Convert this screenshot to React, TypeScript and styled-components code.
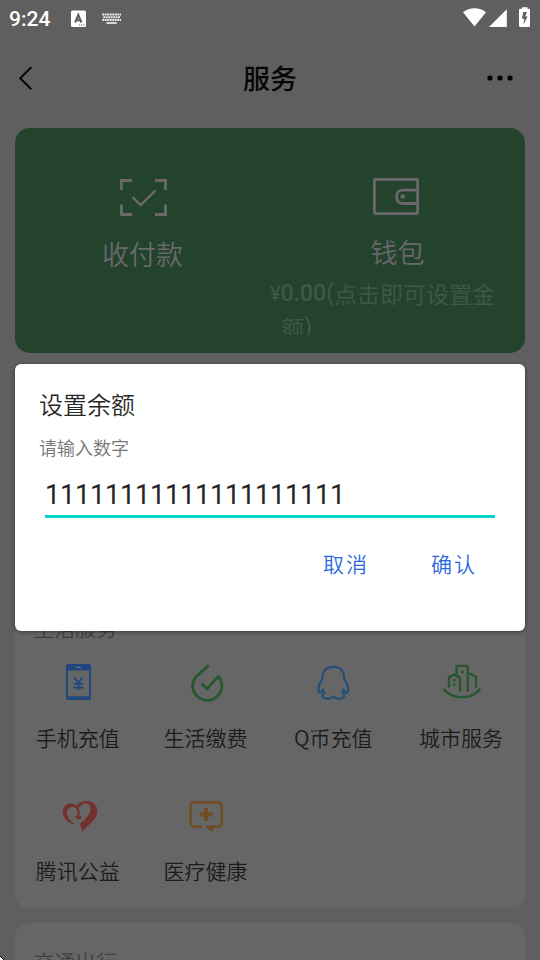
import React from "react";
import styled, { createGlobalStyle } from "styled-components";

const Global = createGlobalStyle`
  * { box-sizing: border-box; }
  html, body { margin: 0; padding: 0; background: #5f5f5f; overflow: hidden; }
  button, input { font: inherit; border: 0; padding: 0; background: none; outline: 0; }
`;

const Screen = styled.div`
  position: relative;
  display: flex;
  flex-direction: column;
  width: 540px;
  height: 960px;
  overflow: hidden;
  background: #5f5f5f;
  font-family: "Noto Sans CJK SC", sans-serif;
  font-weight: 350;
  color: #1c1c1c;
  svg { display: block; overflow: visible; }
`;

const StatusBar = styled.header`
  display: flex;
  flex: none;
  align-items: center;
  height: 37px;
  padding: 0 9px;
`;

const Clock = styled.time`
  width: 62px;
  padding-top: 1px;
  color: #fff;
  font: 500 21px/37px Roboto, sans-serif;
`;

const Spacer = styled.div`
  flex: 1;
`;

const NavBar = styled.nav`
  display: grid;
  flex: none;
  grid-template-columns: 60px 1fr 60px;
  align-items: center;
  height: 81px;
  margin-bottom: 10px;
`;

const NavButton = styled.button<{ $start: number }>`
  padding-left: ${(p) => p.$start}px;
`;

const NavTitle = styled.h1`
  margin: 0;
  color: #060606;
  font-size: 27px;
  font-weight: 500;
  line-height: 78px;
  text-align: center;
`;

const PayCard = styled.section`
  display: grid;
  flex: none;
  grid-template-columns: 255px 255px;
  height: 225px;
  margin: 0 15px;
  border-radius: 15px;
  background: #23432d;
  color: #6a686b;
`;

const PayItem = styled.div<{ $top: number; $shift: number }>`
  display: flex;
  flex-direction: column;
  align-items: center;
  padding-top: ${(p) => p.$top}px;
  > svg { margin-left: ${(p) => p.$shift}px; }
`;

const PayLabel = styled.div<{ $gap: number }>`
  margin-top: ${(p) => p.$gap}px;
  font-size: 27px;
  line-height: 40px;
`;

const Balance = styled.div`
  align-self: stretch;
  height: 58px;
  margin-top: 5px;
  overflow: hidden;
  color: #40584a;
  font-size: 23px;
  line-height: 32.5px;
  white-space: nowrap;
`;

const BalanceLine = styled.div<{ $indent: number }>`
  display: flex;
  padding-left: ${(p) => p.$indent}px;
`;

const Amount = styled.span<{ $weight: number; $size: number }>`
  padding-top: 1px;
  font-family: Roboto, sans-serif;
  font-size: ${(p) => p.$size}px;
  font-weight: ${(p) => p.$weight};
`;

const ServiceCard = styled.section<{ $height: number; $top: number }>`
  flex: none;
  height: ${(p) => p.$height}px;
  margin: ${(p) => p.$top}px 15px 0;
  border-radius: 14px;
  background: #666;
`;

const SectionTitle = styled.h2`
  margin: 0;
  padding: 22px 0 0 18.5px;
  color: #3f3f3f;
  font-size: 20.8px;
  font-weight: 350;
  line-height: 32px;
`;

const ServiceGrid = styled.div`
  display: grid;
  grid-template-columns: repeat(4, 127.7px);
  grid-auto-rows: 133px;
  padding-top: 14px;
`;

const Service = styled.div`
  display: flex;
  flex-direction: column;
  align-items: center;
  padding-right: 2px;
`;

const IconBox = styled.div`
  display: flex;
  align-items: center;
  justify-content: center;
  width: 48px;
  height: 48px;
`;

const ServiceLabel = styled.div`
  margin-top: 14px;
  font-size: 21px;
  line-height: 34px;
`;

const Dialog = styled.div`
  position: absolute;
  top: 364px;
  left: 15px;
  display: flex;
  flex-direction: column;
  width: 510px;
  height: 267px;
  padding: 20px 24px 0;
  border-radius: 6px;
  background: #fff;
  box-shadow: 0 1px 4px rgba(0, 0, 0, 0.4);
`;

const DialogTitle = styled.h3`
  margin: 0;
  color: #282828;
  font-size: 24px;
  font-weight: 350;
  line-height: 39px;
`;

const DialogMessage = styled.p`
  margin: 9px 0 0;
  color: #757575;
  font-size: 18px;
  line-height: 30px;
`;

const AmountInput = styled.input`
  width: 450px;
  height: 47px;
  margin: 9px 0 0 6px;
  padding-top: 4px;
  border-bottom: 3px solid #05d6c7;
  border-radius: 0;
  color: #242424;
  font: 400 27px/40px Roboto, sans-serif;
  letter-spacing: -0.17px;
`;

const DialogActions = styled.div`
  display: flex;
  justify-content: flex-end;
  gap: 62px;
  margin-top: 28px;
  padding-right: 24px;
`;

const DialogButton = styled.button`
  color: #2a68de;
  font-size: 21px;
  line-height: 34px;
  letter-spacing: 2px;
`;

const CornerMark = styled.svg`
  position: absolute;
  left: 0;
  bottom: 0;
`;

const KeyboardIcon = () => (
  <svg width="20" height="12" viewBox="0 0 20 12">
    <g stroke="#ececec" strokeWidth="2" strokeDasharray="1.9 .6">
      <path d="M.3 1.4H19M1.2 4.2H18.5M.3 7H19" />
    </g>
    <path d="M4.5 10h10.3" stroke="#ececec" strokeWidth="1.7" />
  </svg>
);

const InputMethodIcon = () => (
  <svg width="15" height="16" viewBox="0 0 15 16">
    <rect y="-.5" width="15" height="16.5" rx="1.5" fill="#fff" />
    <path d="M4.2 11.5 7.3 4l3.1 7.5M5.3 9.2h4" fill="none" stroke="#5f5f5f" strokeWidth="2.1" />
    <path d="M8 14h5.5" stroke="#5f5f5f" strokeWidth="1.2" strokeDasharray="1.2 .9" />
  </svg>
);

const SignalIcons = () => (
  <svg width="68" height="22" viewBox="0 0 68 22">
    <g fill="#fff">
      <path d="M0 4.3C6.5-1.1 16.5-1.1 23 4.3L11.5 18.5z" />
      <path d="M43.8 1.2V19H26z" />
      <path d="M59-.8h5.5v1.5h1.2q1.3 0 1.3 1.3v15.7q0 1.3-1.3 1.3h-8.4q-1.3 0-1.3-1.3V2q0-1.3 1.3-1.3H59z" />
    </g>
    <path d="m60.2 4-1.2 6.8h2.2l-.8 6 4.2-8.3h-2.4L64 4z" fill="#5f5f5f" />
  </svg>
);

const BackIcon = () => (
  <svg width="14" height="24" viewBox="0 0 14 24">
    <path d="M13.3 1.2 2.2 12.3l11.1 11" fill="none" stroke="#050505" strokeWidth="2" />
  </svg>
);

const MoreIcon = () => (
  <svg width="28" height="6" viewBox="0 0 28 6">
    <circle cx="3" cy="3" r="2.6" />
    <circle cx="13" cy="3" r="2.6" />
    <circle cx="23" cy="3" r="2.6" />
  </svg>
);

const ScanIcon = () => (
  <svg width="47" height="37" viewBox="0 0 47 37" fill="none" stroke="#6a686b">
    <path d="M1.5 11V1.5H12M35 1.5h10.5V11M45.5 25.5v10H35M12 35.5H1.5v-10" strokeWidth="2.8" />
    <path d="m12.5 18.2 8.2 7.8 14.6-14.4" strokeWidth="2.4" />
  </svg>
);

const WalletIcon = () => (
  <svg width="46" height="37" viewBox="0 0 46 37" fill="none" stroke="#6a686b" strokeWidth="2.8">
    <rect x="1.4" y="1.4" width="43.2" height="34.2" rx="1" />
    <path d="M44 12.1H30q-6.4 0-6.4 6.7t6.4 6.7h14" />
    <circle cx="29.7" cy="18.5" r="2.3" fill="#6a686b" stroke="none" />
  </svg>
);

const PhoneIcon = () => (
  <svg width="48" height="48" viewBox="0 0 48 48">
    <path
      fill="#20477f"
      fillRule="evenodd"
      d="M14 6h21q2 0 2 2v32q0 2-2 2H14q-2 0-2-2V8q0-2 2-2Zm0 6.6v25.6h21V12.6Z"
    />
    <path d="M22 9.3h5" stroke="#777" strokeWidth="1.2" />
    <path d="m20.3 19 4.1 6.2 4.3-6.2M19.5 25.8h10M19.5 29.5h10M24.5 25v7" fill="none" stroke="#20477f" strokeWidth="1.8" />
  </svg>
);

const UtilityIcon = () => (
  <svg width="48" height="48" viewBox="0 0 48 48" fill="none" stroke="#27572f" strokeWidth="2.8">
    <path d="M26.9 7.2 14.4 18.4A14.6 14.4 0 1 0 36.2 18.4L24.9 31 19.6 25.6" strokeLinejoin="round" />
  </svg>
);

const PenguinIcon = () => (
  <svg width="48" height="48" viewBox="0 0 48 48" fill="none" stroke="#234e75" strokeWidth="2.2">
    <path
      strokeLinejoin="round"
      d="M24.3 8.8c-7 0-10.8 4.4-10.8 11.2-.2 2-1.8 3.1-2.6 5.2-1.7 4-2.1 8.6-.4 9.4 1.5.7 2-1.5 3.9-3-.2 2 .3 2.6 1.2 3.4-2.1 1-2.6 2.6-1.8 3.9 1.7 2.6 8.5 2.3 10.5-.5 2 2.8 8.8 3.1 10.5.5.8-1.3.3-2.9-1.8-3.9.9-.8 1.4-1.4 1.2-3.4 1.9 1.5 2.4 3.7 3.9 3 1.7-.8 1.3-5.4-.4-9.4-.8-2.1-2.4-3.2-2.6-5.2C35.1 13.2 31.3 8.8 24.3 8.8Z"
    />
  </svg>
);

const CityIcon = () => (
  <svg width="48" height="48" viewBox="0 0 48 48" fill="none" stroke="#27572f" strokeWidth="2.4">
    <path d="M12 29.8V19.2l5-2.6 6 3V33.5M19.6 17V8.9q0-1 1-1h9.2q1 0 1 1v24.6M31 14.8l8 4.2v10.8" />
    <path d="M17.3 20.9v2.6M17.3 25.4V28M25.3 12.7v2.6" strokeWidth="2.6" />
    <path d="M6.6 30.8c8.4 11.3 28.2 11.3 36.6 0" strokeWidth="2.4" />
  </svg>
);

const HeartIcon = () => (
  <svg width="48" height="48" viewBox="0 0 48 48" fill="#73302c">
    <path d="M19.4 33.4C12.5 30.6 8.8 26 8.9 20.8 9 15 13.4 11.8 18 12.5c4.8.8 7.9 5 7.7 9.3l-.7 2.6c1.6 0 2.7.8 2.3 2.6-.7 1.8-3.2 1.6-4.8.2-1.3-.5-1.9-1-2-1.7 1.5.6 2.4-.2 2.9-2.2.8-3.7-1.3-7-4.7-7.4-3.8-.3-5.9 2.5-5.7 6.2.1 4 2.6 7.3 6.6 10.1Z" />
    <path d="M22.3 14.2c2.8-3 7.3-4.7 11.9-4.2 5.9.6 9.3 5 9.1 10.4-.3 6.2-5.3 10.7-10 14.7l-4.9 5.8-2.4-8.2c5.2-4.3 10.2-8.8 10.5-14.2.2-4.5-2.8-6.9-6.4-6-2.4.5-3.7 2.2-4.8 4.6Z" />
  </svg>
);

const MedicalIcon = () => (
  <svg width="48" height="48" viewBox="0 0 48 48" fill="none" stroke="#704c22" strokeWidth="2.4">
    <path d="M20 35.7h-7.4q-4 0-4-4V15.3q0-4 4-4h23q4 0 4 4v16.4q0 4-4 4H30" />
    <path d="M24.1 17v13M17.6 23.5h13" strokeWidth="3.8" />
    <path d="M23.2 34.5h8.6v2.2l-2 4.4z" fill="#704c22" stroke="none" />
  </svg>
);

const services = [
  { label: "手机充值", Icon: PhoneIcon },
  { label: "生活缴费", Icon: UtilityIcon },
  { label: "Q币充值", Icon: PenguinIcon },
  { label: "城市服务", Icon: CityIcon },
  { label: "腾讯公益", Icon: HeartIcon },
  { label: "医疗健康", Icon: MedicalIcon },
];

const StatusGap = styled.div`
  width: 16px;
`;

export default function App() {
  return (
    <Screen>
      <Global />
      <StatusBar>
        <Clock>9:24</Clock>
        <InputMethodIcon />
        <StatusGap />
        <KeyboardIcon />
        <Spacer />
        <SignalIcons />
      </StatusBar>
      <NavBar>
        <NavButton $start={18} aria-label="返回"><BackIcon /></NavButton>
        <NavTitle>服务</NavTitle>
        <NavButton $start={7} aria-label="更多"><MoreIcon /></NavButton>
      </NavBar>
      <PayCard>
        <PayItem $top={51} $shift={2}>
          <ScanIcon />
          <PayLabel $gap={18}>收付款</PayLabel>
        </PayItem>
        <PayItem $top={50} $shift={-3}>
          <WalletIcon />
          <PayLabel $gap={17}>钱包</PayLabel>
          <Balance>
            <BalanceLine $indent={0}>
              <Amount $weight={400} $size={20}>¥</Amount>
              <Amount $weight={500} $size={23}>0.00</Amount>
              <Amount $weight={400} $size={23}>(</Amount>
              点击即可设置金
            </BalanceLine>
            <BalanceLine $indent={11}>额<Amount $weight={400} $size={23}>)</Amount></BalanceLine>
          </Balance>
        </PayItem>
      </PayCard>
      <ServiceCard $height={318} $top={237}>
        <SectionTitle>生活服务</SectionTitle>
        <ServiceGrid>
          {services.map(({ label, Icon }) => (
            <Service key={label}>
              <IconBox><Icon /></IconBox>
              <ServiceLabel>{label}</ServiceLabel>
            </Service>
          ))}
        </ServiceGrid>
      </ServiceCard>
      <ServiceCard $height={200} $top={15}>
        <SectionTitle>交通出行</SectionTitle>
      </ServiceCard>
      <Dialog role="dialog">
        <DialogTitle>设置余额</DialogTitle>
        <DialogMessage>请输入数字</DialogMessage>
        <AmountInput defaultValue="11111111111111111111" />
        <DialogActions>
          <DialogButton>取消</DialogButton>
          <DialogButton>确认</DialogButton>
        </DialogActions>
      </Dialog>
      <CornerMark width="4" height="4" viewBox="0 0 4 4">
        <path d="M0 0 4 4H0z" fill="#fff" />
        <path d="m0 0 4 4" stroke="#000" />
      </CornerMark>
    </Screen>
  );
}
